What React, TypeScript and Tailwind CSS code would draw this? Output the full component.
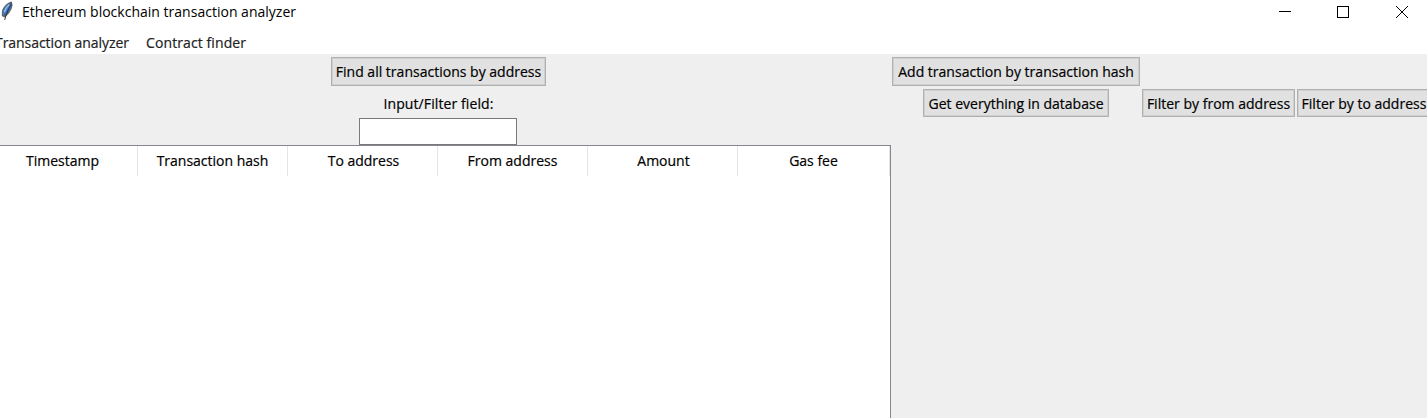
import type { ReactNode } from "react";

const columns = [
  { title: "Timestamp", width: "w-[152px]", pad: "pl-0.5" },
  { title: "Transaction hash", width: "w-[150px]", pad: "pl-0" },
  { title: "To address", width: "w-[150px]", pad: "pl-0.5" },
  { title: "From address", width: "w-[150px]", pad: "pl-0" },
  { title: "Amount", width: "w-[150px]", pad: "pl-0.5" },
  { title: "Gas fee", width: "w-[152px]", pad: "pl-0" },
];

function TkButton({ className, children }: { className: string; children: ReactNode }) {
  return (
    <button
      className={`flex shrink-0 items-center justify-center border border-[#b0b0b0] bg-[#e1e1e1] tracking-[0.01px] whitespace-nowrap shadow-[inset_0_0_0_1px_#d0d0d0] [-webkit-text-stroke:0.2px_#000] ${className}`}
    >
      <span>{children}</span>
    </button>
  );
}

function FeatherIcon() {
  return (
    <svg width="16" height="22" viewBox="0 0 16 22" className="shrink-0">
      <path d="M11 1.500C7 3 3.200 6.500 2 11L1.800 16L4.500 17.500C8 15 11.800 10.500 12.500 5.500L12 2Z" fill="#5b6672" />
      <path d="M10 3.500C6 6 3 9.500 2.800 15C7.500 13 10.800 9 11 4Z" fill="#3b80d2" />
      <path d="M9.500 4.500C7 6.500 5 9 4.300 12" stroke="#8fbef3" strokeWidth="1.200" fill="none" />
      <path d="M11.300 3.500C9 8.500 6.200 13 4.700 20" stroke="#20252c" strokeWidth="0.900" fill="none" />
    </svg>
  );
}

function TitleBar() {
  return (
    <header className="flex h-8 items-start justify-between bg-white">
      <div className="flex items-start">
        <FeatherIcon />
        <span className="ml-1.5 pt-0.5 leading-5 tracking-[0.01px] whitespace-nowrap">
          Ethereum blockchain transaction analyzer
        </span>
      </div>
      <svg width="148" height="24" viewBox="0 0 148 24" fill="none" stroke="#000" shapeRendering="crispEdges">
        <path d="M0 11.500H12" />
        <rect x="58.500" y="6.500" width="11" height="11" />
        <path d="M117 6L129 18M129 6L117 18" shapeRendering="auto" />
      </svg>
    </header>
  );
}

export default function App() {
  return (
    <div className="flex h-[418px] w-[1427px] flex-col overflow-hidden bg-[#efefef] font-['Open_Sans','Noto_Sans',sans-serif] text-[14px] leading-5 text-black">
      <TitleBar />
      <nav className="flex h-[22px] shrink-0 items-start bg-white text-[#222] whitespace-nowrap [-webkit-text-stroke:0.2px_#222]">
        <span className="-ml-[5px] w-[151px] pt-px tracking-[-0.05px]">Transaction analyzer</span>
        <span className="pt-px tracking-[0.1px]">Contract finder</span>
      </nav>
      <main className="flex min-h-0 flex-1">
        <section className="-ml-[14px] flex w-[905px] shrink-0 flex-col items-center pt-[3px]">
          <TkButton className="h-[29px] w-[215px]">Find all transactions by address</TkButton>
          <label className="mt-2 h-6 tracking-[0.1px] [-webkit-text-stroke:0.2px_#000]" htmlFor="filter">
            Input/Filter field:
          </label>
          <input id="filter" className="mr-px h-[27px] w-[158px] shrink-0 border border-[#7a7a7a] bg-white px-1 outline-none" />
          <div className="flex min-h-0 w-full flex-1 border-t border-r border-[#828790] bg-white">
            <div className="flex h-[30px]">
              {columns.map((c) => (
                <div
                  key={c.title}
                  className={`flex items-center justify-center border-r border-[#e5e5e5] whitespace-nowrap [-webkit-text-stroke:0.2px_#000] ${c.width} ${c.pad}`}
                >
                  <span>{c.title}</span>
                </div>
              ))}
            </div>
          </div>
        </section>
        <section className="flex shrink-0 items-start pt-[3px]">
          <div className="flex w-[250px] flex-col items-center gap-[3px]">
            <TkButton className="h-[29px] w-[248px]">Add transaction by transaction hash</TkButton>
            <TkButton className="h-[28px] w-[186px] pt-px">Get everything in database</TkButton>
          </div>
          <div className="flex gap-[2px] pt-8 pl-px">
            <TkButton className="h-[28px] w-[153px] pt-px">Filter by from address</TkButton>
            <TkButton className="h-[28px] w-[134px] pt-px">Filter by to address</TkButton>
          </div>
        </section>
      </main>
    </div>
  );
}
